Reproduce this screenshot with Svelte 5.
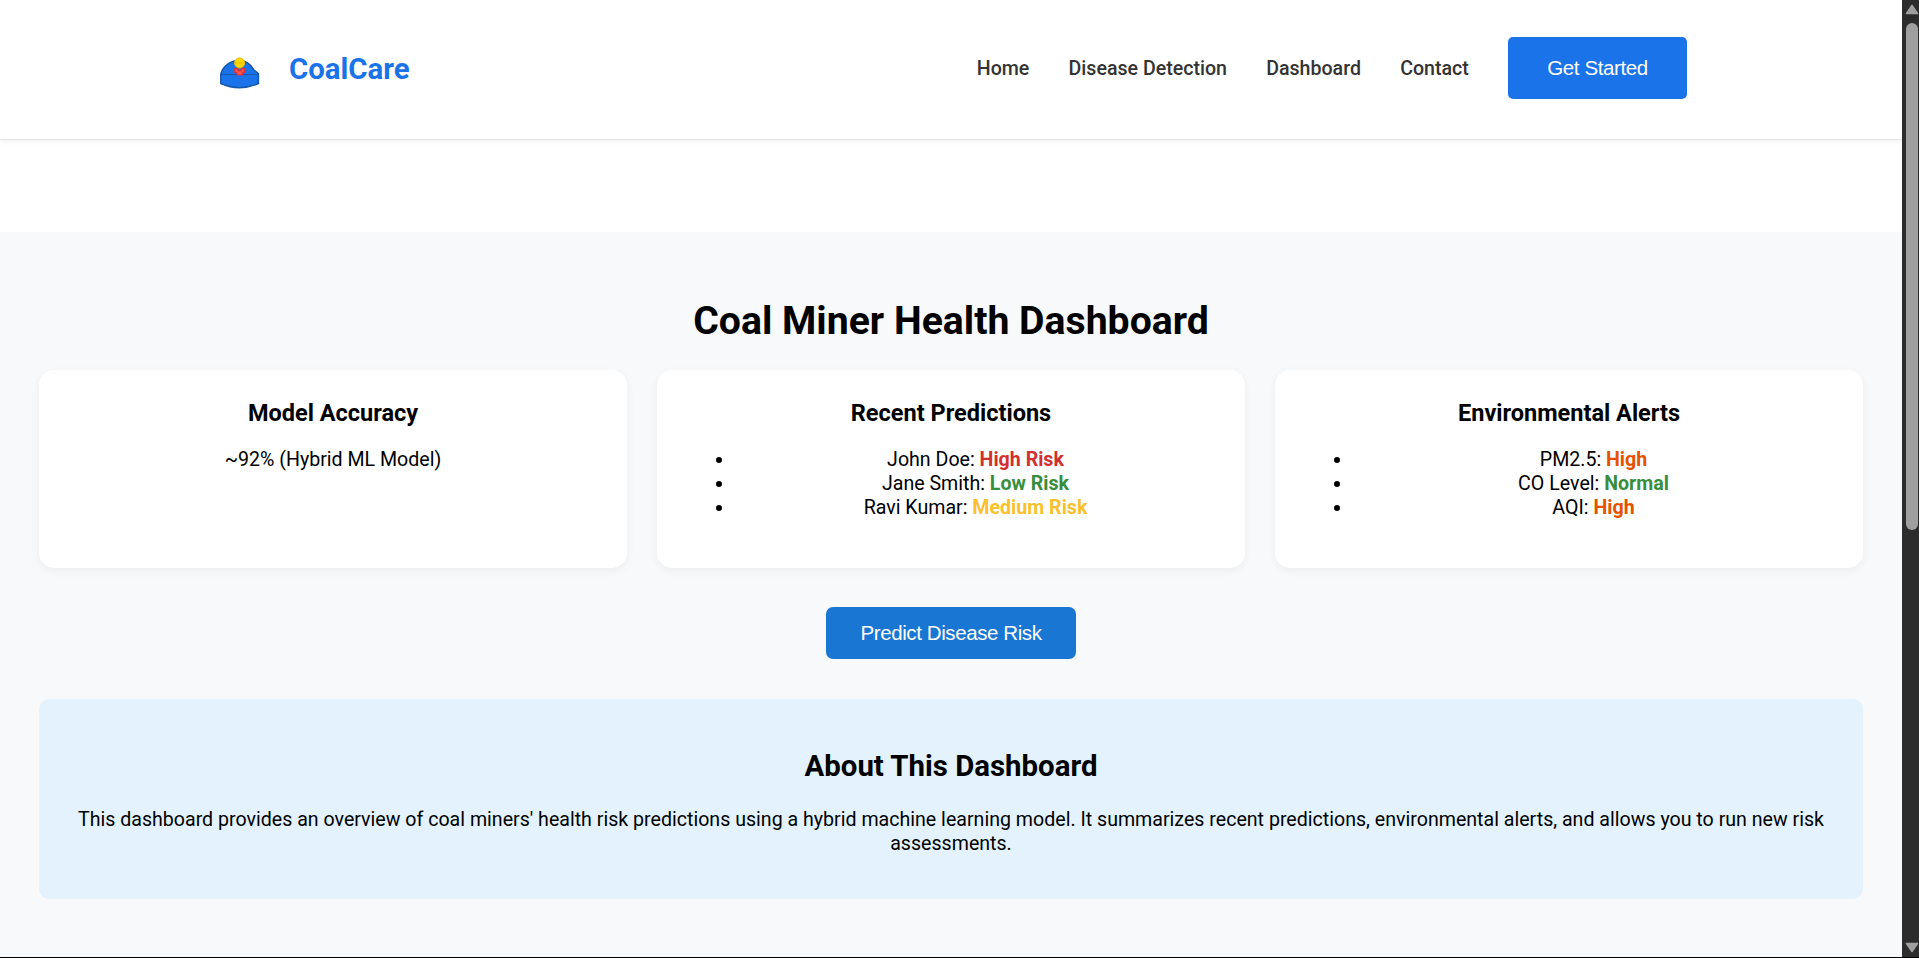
<script>
  const nav = ['Home', 'Disease Detection', 'Dashboard', 'Contact'];
  const lists = [
    {
      title: 'Recent Predictions',
      items: [
        ['John Doe', 'High Risk', 'red'],
        ['Jane Smith', 'Low Risk', 'green'],
        ['Ravi Kumar', 'Medium Risk', 'yellow']
      ]
    },
    {
      title: 'Environmental Alerts',
      items: [
        ['PM2.5', 'High', 'orange'],
        ['CO Level', 'Normal', 'green'],
        ['AQI', 'High', 'orange']
      ]
    }
  ];
</script>

<div class="window">
  <div class="page">
    <header>
      <div class="brand">
        <svg width="40" height="32" viewBox="0 0 40 32">
          <path d="M.8 18V17C3 9 10 3.6 19.5 3.6C26 3.6 30.5 7 34 13L38.4 16.5V26.5Q29 30.7 19.5 30.7Q10 30.7 .8 26.5Z" fill="#1a73e8" stroke="#1557b0" stroke-width="1.5" />
          <path d="M1 17.5H38.5" stroke="#1557b0" stroke-width="1.2" />
          <path d="M14.8 11.6H18V13.6H21.2V11.6H24.4V15.5H22.4V18H17V15.5H14.8Z" fill="#ff5252" stroke="#d9303e" stroke-width="1.2" />
          <circle cx="19.6" cy="6" r="5" fill="#ffd600" stroke="#e6bb00" stroke-width="1" />
          <path d="M15 6H24.5" stroke="#e3b505" stroke-width=".8" />
        </svg>
        <span>CoalCare</span>
      </div>
      <nav>
        {#each nav as item}<a href="#top">{item}</a>{/each}
        <button class="start">Get Started</button>
      </nav>
    </header>
    <main>
      <h1>Coal Miner Health Dashboard</h1>
      <div class="cards">
        <section class="card">
          <h3>Model Accuracy</h3>
          <p>~92% (Hybrid ML Model)</p>
        </section>
        {#each lists as list}
          <section class="card">
            <h3>{list.title}</h3>
            <ul>
              {#each list.items as [name, value, tone]}
                <li>{name}: <b class={tone}>{value}</b></li>
              {/each}
            </ul>
          </section>
        {/each}
      </div>
      <button class="predict">Predict Disease Risk</button>
      <section class="about">
        <h2>About This Dashboard</h2>
        <p>This dashboard provides an overview of coal miners' health risk predictions using a hybrid machine learning model. It summarizes recent predictions, environmental alerts, and allows you to run new risk assessments.</p>
      </section>
    </main>
  </div>
  <div class="scrollbar">
    <svg width="14" height="11" viewBox="0 0 14 11"><path d="M7 1.5L12.5 9.5H1.5Z" fill="#9f9f9f" stroke="#9f9f9f" stroke-width="1.6" stroke-linejoin="round" /></svg>
    <div class="thumb"></div>
    <svg class="down" width="14" height="11" viewBox="0 0 14 11"><path d="M7 9.5L12.5 1.5H1.5Z" fill="#9f9f9f" stroke="#9f9f9f" stroke-width="1.6" stroke-linejoin="round" /></svg>
  </div>
</div>

<style>
  :global(body) { margin: 0; overflow: hidden; }
  * { box-sizing: border-box; }
  .window {
    display: flex; width: 1919px; height: 958px;
    border-bottom: 1px solid #000;
    font: 19.6px/24px Roboto, sans-serif; color: #000;
  }
  .page { width: 1902px; display: flex; flex-direction: column; background: #fff; }
  header {
    height: 140px; flex: none; padding: 0 215px 3px 220px;
    display: flex; align-items: center; justify-content: space-between;
    border-bottom: 1px solid #e5e5e5; box-shadow: 0 2px 5px rgba(0, 0, 0, .05);
  }
  .brand { display: flex; align-items: center; gap: 29px; font-size: 29.4px; font-weight: 700; line-height: 36px; color: #1a73e8; }
  .brand svg { margin-top: 9px; }
  .brand span { padding-top: 2px; }
  nav { display: flex; align-items: center; gap: 39.2px; }
  nav a { padding-top: 2px; color: #333; font-weight: 500; text-decoration: none; }
  button { border: 0; color: #fff; font: 20.5px/24px "Liberation Sans", sans-serif; letter-spacing: -.4px; padding: 0; }
  .start { width: 179px; height: 62px; border-radius: 5px; background: #1a73e8; }
  main {
    flex: 1; margin-top: 92px; padding: 65px 39px 0; background: #f8f9fb;
    display: flex; flex-direction: column; text-align: center;
  }
  h1 { font-size: 39.2px; line-height: 48px; margin: 0 0 25px; }
  .cards { display: grid; grid-template-columns: repeat(3, 1fr); gap: 30px; }
  .card { height: 198px; padding: 29px 29.4px; background: #fff; border-radius: 15px; box-shadow: 0 3px 10px rgba(0, 0, 0, .05); }
  h3 { font-size: 23.52px; line-height: 28px; margin: 0 0 21px; }
  p, ul { margin: 0; }
  ul { padding-left: 49px; }
  b { font-weight: 700; }
  .red { color: #d32f2f; }
  .green { color: #388e3c; }
  .yellow { color: #fbc02d; }
  .orange { color: #e65100; }
  .predict { align-self: center; width: 250px; height: 52px; margin: 39px 0 40px; border-radius: 7px; background: #1976d2; }
  .about { height: 200px; padding: 49px 29.4px 0; border-radius: 10px; background: #e3f2fd; }
  h2 { font-size: 29.4px; line-height: 36px; margin: 0 0 24px; }
  .scrollbar { width: 17px; background: #2c2c2c; display: flex; flex-direction: column; align-items: center; padding: 4px 0 4px 3px; }
  .scrollbar svg { flex: none; }
  .thumb { width: 12px; height: 507px; margin-top: 8px; border-radius: 6px; background: #9f9f9f; }
  .down { margin-top: auto; }
</style>
